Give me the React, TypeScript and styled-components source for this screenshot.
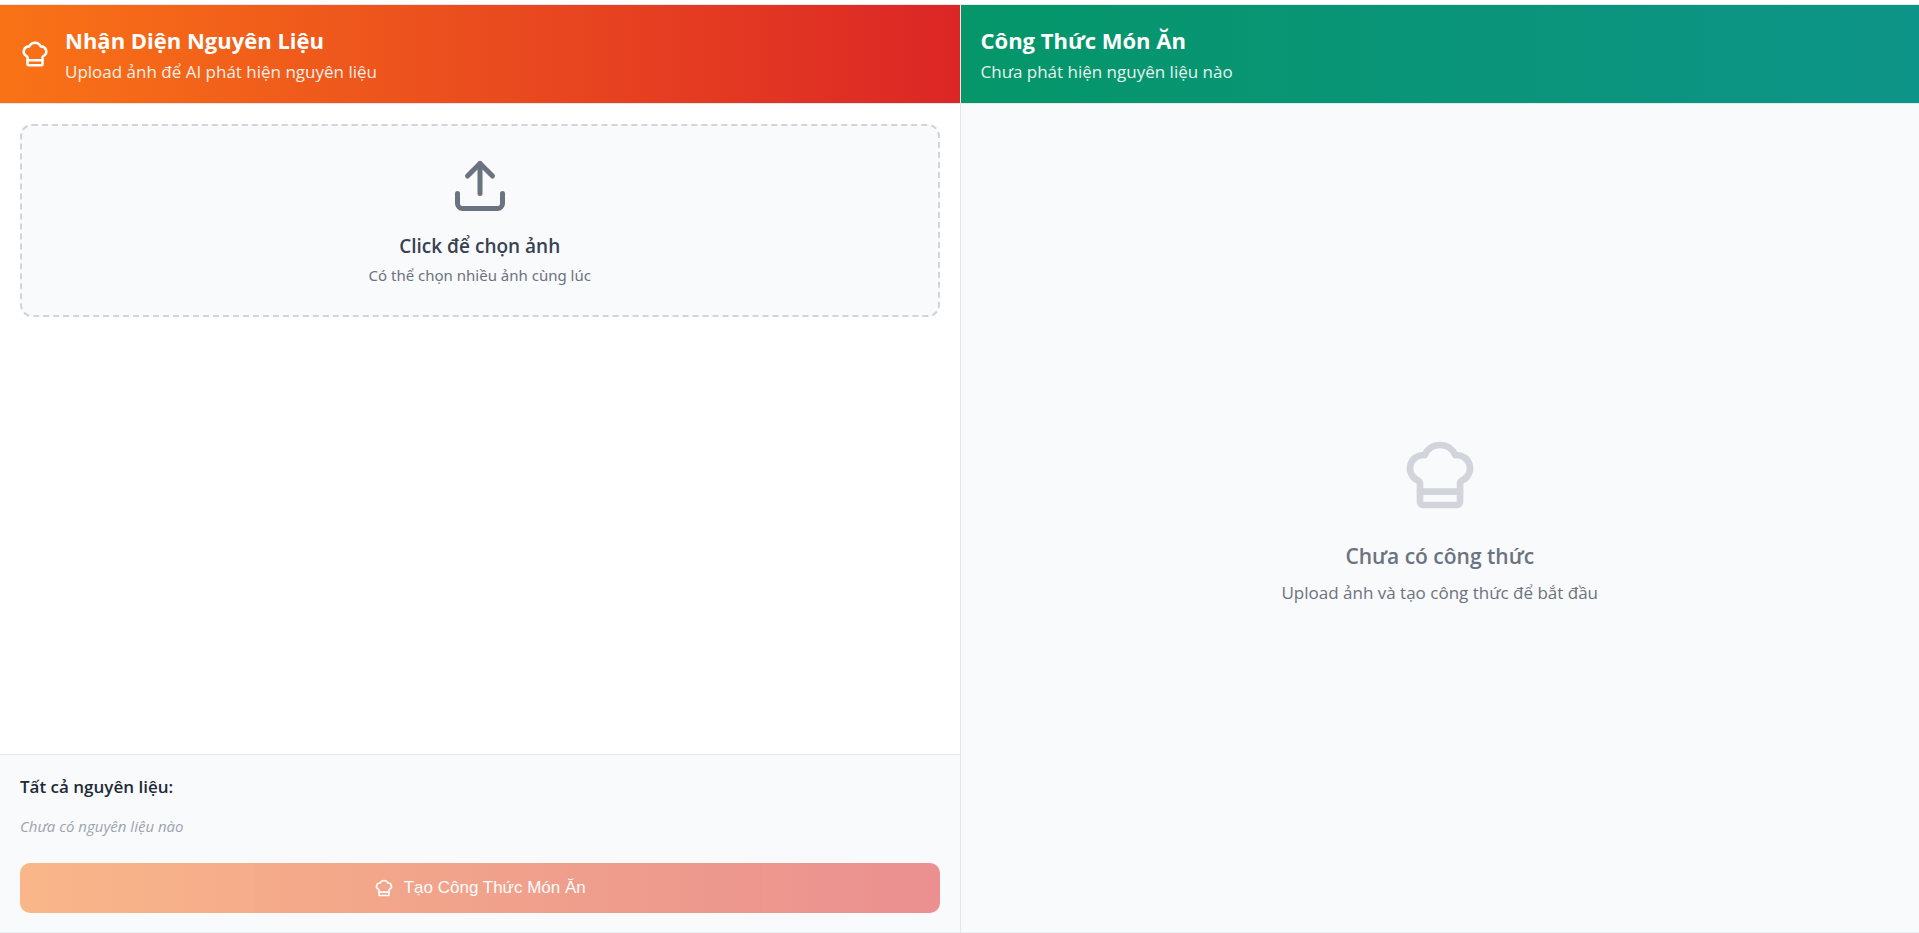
import React, { useState } from "react";
import styled, { createGlobalStyle, css } from "styled-components";
import { ChefHat, Upload } from "lucide-react";

const GlobalStyle = createGlobalStyle`
  *, *::before, *::after { box-sizing: border-box; }
  body {
    margin: 0;
    background: #ffffff;
    font-family: "Segoe UI", "Open Sans", "Noto Sans", sans-serif;
  }
  h1, h2, h3, p { margin: 0; }
`;

const Page = styled.main`
  display: flex;
  height: 100vh;
  padding-top: 4px;
`;

const Panel = styled.section<{ $tinted?: boolean }>`
  min-width: 0;
  display: flex;
  flex-direction: column;
  border-top: 1px solid #e5e7eb;
  border-bottom: 1px solid #e9edf5;
  background: ${(p) => (p.$tinted ? "#f9fafb" : "#ffffff")};
  ${(p) =>
    p.$tinted
      ? css`
          flex: 1;
        `
      : css`
          flex: 0 0 calc(50% + 1px);
          border-right: 1px solid #e5e7eb;
        `}
`;

const PanelHeader = styled.header<{ $from: string; $to: string }>`
  display: flex;
  align-items: center;
  gap: 15px;
  padding: 20px;
  color: #ffffff;
  border-bottom: 1px solid #e5e7eb;
  background: linear-gradient(90deg, ${(p) => p.$from}, ${(p) => p.$to});
  background-clip: padding-box;
`;

const PanelTitle = styled.h2`
  font-size: 22px;
  line-height: 30px;
  font-weight: 700;
`;

const PanelSubtitle = styled.p`
  margin-top: 6px;
  font-size: 17px;
  line-height: 22px;
  opacity: 0.9;
`;

const UploadArea = styled.div`
  flex: 1;
  min-height: 0;
  overflow-y: auto;
  padding: 20px;
`;

const DropZone = styled.label`
  display: flex;
  flex-direction: column;
  align-items: center;
  padding: 30px;
  border: 2px dashed #d1d5db;
  border-radius: 12px;
  background: #f9fafb;
  color: #6b7280;
  cursor: pointer;
`;

const FileInput = styled.input`
  position: absolute;
  width: 1px;
  height: 1px;
  opacity: 0;
`;

const DropTitle = styled.span`
  margin-top: 16px;
  font-size: 19px;
  line-height: 28px;
  font-weight: 600;
  color: #374151;
`;

const DropHint = styled.span`
  margin-top: 5px;
  font-family: "Segoe UI", "Noto Sans", sans-serif;
  font-size: 15px;
  line-height: 20px;
`;

const Summary = styled.footer`
  padding: 20px 20px 19px;
  border-top: 1px solid #e5e7eb;
  background: #f9fafb;
`;

const SummaryTitle = styled.h3`
  font-size: 17px;
  line-height: 24px;
  font-weight: 600;
  color: #1f2937;
`;

const SummaryEmpty = styled.p`
  margin: 15px 0 25px;
  font-size: 15px;
  line-height: 24px;
  font-style: italic;
  color: #9ca3af;
`;

const GenerateButton = styled.button`
  display: flex;
  align-items: center;
  justify-content: center;
  gap: 10px;
  width: 100%;
  height: 50px;
  border: 0;
  border-radius: 10px;
  background: linear-gradient(90deg, #f97316, #dc2626);
  color: #ffffff;
  font-family: "Liberation Sans", Arial, sans-serif;
  font-size: 17px;
  cursor: pointer;

  &:disabled {
    opacity: 0.5;
    cursor: not-allowed;
  }
`;

const EmptyState = styled.div`
  flex: 1;
  display: flex;
  flex-direction: column;
  align-items: center;
  justify-content: center;
  padding: 24px 20px 20px;
  color: #6b7280;
`;

const EmptyTitle = styled.h3`
  margin: 25px 0 8px;
  font-size: 21px;
  line-height: 32px;
  font-weight: 600;
`;

const EmptyText = styled.p`
  font-size: 17px;
  line-height: 26px;
`;

export default function App() {
  const [count, setCount] = useState(0);

  return (
    <>
      <GlobalStyle />
      <Page>
        <Panel>
          <PanelHeader $from="#f97316" $to="#dc2626">
            <ChefHat size={30} aria-hidden />
            <div>
              <PanelTitle>Nhận Diện Nguyên Liệu</PanelTitle>
              <PanelSubtitle>Upload ảnh để AI phát hiện nguyên liệu</PanelSubtitle>
            </div>
          </PanelHeader>
          <UploadArea>
            <DropZone>
              <FileInput
                type="file"
                accept="image/*"
                multiple
                onChange={(e) => setCount(e.target.files?.length ?? 0)}
              />
              <Upload size={60} aria-hidden />
              <DropTitle>Click để chọn ảnh</DropTitle>
              <DropHint>Có thể chọn nhiều ảnh cùng lúc</DropHint>
            </DropZone>
          </UploadArea>
          <Summary>
            <SummaryTitle>Tất cả nguyên liệu:</SummaryTitle>
            <SummaryEmpty>Chưa có nguyên liệu nào</SummaryEmpty>
            <GenerateButton type="button" disabled={count === 0}>
              <ChefHat size={20} aria-hidden />
              Tạo Công Thức Món Ăn
            </GenerateButton>
          </Summary>
        </Panel>
        <Panel $tinted>
          <PanelHeader $from="#059669" $to="#0d9488">
            <div>
              <PanelTitle>Công Thức Món Ăn</PanelTitle>
              <PanelSubtitle>Chưa phát hiện nguyên liệu nào</PanelSubtitle>
            </div>
          </PanelHeader>
          <EmptyState>
            <ChefHat size={80} color="#d1d5db" aria-hidden />
            <EmptyTitle>Chưa có công thức</EmptyTitle>
            <EmptyText>Upload ảnh và tạo công thức để bắt đầu</EmptyText>
          </EmptyState>
        </Panel>
      </Page>
    </>
  );
}
